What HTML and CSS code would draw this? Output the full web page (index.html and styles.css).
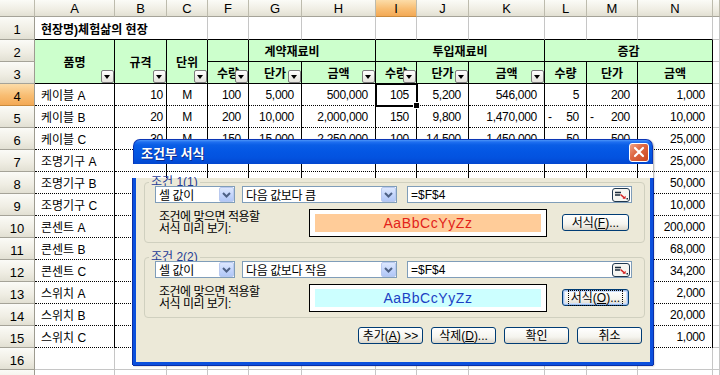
FILE: index.html
```html
<!DOCTYPE html>
<html lang="ko">
<head>
    <meta charset="UTF-8">
    <meta name="viewport" content="width=device-width, initial-scale=1.0">
    <title>조건부 서식</title>
    <link rel="stylesheet" href="styles.css">
</head>
<body>

<div class="sheet">
    <div class="ch"></div>
    <div class="ch">A</div><div class="ch">B</div><div class="ch">C</div><div class="ch">F</div><div class="ch">G</div><div class="ch">H</div><div class="ch sel">I</div><div class="ch">J</div><div class="ch">K</div><div class="ch">L</div><div class="ch">M</div><div class="ch">N</div><div class="ch"></div>

    <div class="rh">1</div>
    <div class="top cs3 bold t">현장명)체험삶의 현장</div>
    <div class="top"></div><div class="top"></div><div class="top"></div><div class="top"></div><div class="top"></div><div class="top"></div><div class="top"></div><div class="top"></div><div class="top"></div><div></div>

    <div class="rh">2</div>
    <div class="g rs2">품명<i class="fb"></i></div>
    <div class="g rs2">규격<i class="fb"></i></div>
    <div class="g rs2">단위<i class="fb"></i></div>
    <div class="g"></div>
    <div class="g cs2 shift">계약재료비</div>
    <div class="g cs3">투입재료비</div>
    <div class="g cs3">증감</div>
    <div></div>

    <div class="rh">3</div>
    <div class="g">수량<i class="fb"></i></div>
    <div class="g">단가<i class="fb"></i></div>
    <div class="g">금액<i class="fb"></i></div>
    <div class="g">수량<i class="fb"></i></div>
    <div class="g">단가<i class="fb"></i></div>
    <div class="g">금액<i class="fb"></i></div>
    <div class="g">수량</div>
    <div class="g">단가</div>
    <div class="g">금액</div>
    <div></div>

    <div class="rh sel">4</div>
    <div class="d t">케이블 A</div><div class="d n nb">10</div><div class="d ct">M</div><div class="d n">100</div><div class="d n">5,000</div><div class="d n">500,000</div><div class="d n act">105</div><div class="d n">5,200</div><div class="d n">546,000</div><div class="d n">5</div><div class="d n">200</div><div class="d n">1,000</div><div></div>

    <div class="rh">5</div>
    <div class="d t">케이블 B</div><div class="d n nb">20</div><div class="d ct">M</div><div class="d n">200</div><div class="d n">10,000</div><div class="d n">2,000,000</div><div class="d n">150</div><div class="d n">9,800</div><div class="d n">1,470,000</div><div class="d acc"><span>-</span><span>50</span></div><div class="d acc"><span>-</span><span>200</span></div><div class="d n">10,000</div><div></div>

    <div class="rh">6</div>
    <div class="d t">케이블 C</div><div class="d n nb">30</div><div class="d ct">M</div><div class="d n">150</div><div class="d n">15,000</div><div class="d n">2,250,000</div><div class="d n">100</div><div class="d n">14,500</div><div class="d n">1,450,000</div><div class="d n">50</div><div class="d n">500</div><div class="d n">25,000</div><div></div>

    <div class="rh">7</div>
    <div class="d t">조명기구 A</div><div class="d"></div><div class="d"></div><div class="d"></div><div class="d"></div><div class="d"></div><div class="d"></div><div class="d"></div><div class="d"></div><div class="d"></div><div class="d"></div><div class="d n">25,000</div><div></div>

    <div class="rh">8</div>
    <div class="d t">조명기구 B</div><div class="d"></div><div class="d"></div><div class="d"></div><div class="d"></div><div class="d"></div><div class="d"></div><div class="d"></div><div class="d"></div><div class="d"></div><div class="d"></div><div class="d n">50,000</div><div></div>

    <div class="rh">9</div>
    <div class="d t">조명기구 C</div><div class="d"></div><div class="d"></div><div class="d"></div><div class="d"></div><div class="d"></div><div class="d"></div><div class="d"></div><div class="d"></div><div class="d"></div><div class="d"></div><div class="d n">10,000</div><div></div>

    <div class="rh">10</div>
    <div class="d t">콘센트 A</div><div class="d"></div><div class="d"></div><div class="d"></div><div class="d"></div><div class="d"></div><div class="d"></div><div class="d"></div><div class="d"></div><div class="d"></div><div class="d"></div><div class="d n">200,000</div><div></div>

    <div class="rh">11</div>
    <div class="d t">콘센트 B</div><div class="d"></div><div class="d"></div><div class="d"></div><div class="d"></div><div class="d"></div><div class="d"></div><div class="d"></div><div class="d"></div><div class="d"></div><div class="d"></div><div class="d n">68,000</div><div></div>

    <div class="rh">12</div>
    <div class="d t">콘센트 C</div><div class="d"></div><div class="d"></div><div class="d"></div><div class="d"></div><div class="d"></div><div class="d"></div><div class="d"></div><div class="d"></div><div class="d"></div><div class="d"></div><div class="d n">34,200</div><div></div>

    <div class="rh">13</div>
    <div class="d t">스위치 A</div><div class="d"></div><div class="d"></div><div class="d"></div><div class="d"></div><div class="d"></div><div class="d"></div><div class="d"></div><div class="d"></div><div class="d"></div><div class="d"></div><div class="d n">2,000</div><div></div>

    <div class="rh">14</div>
    <div class="d t">스위치 B</div><div class="d"></div><div class="d"></div><div class="d"></div><div class="d"></div><div class="d"></div><div class="d"></div><div class="d"></div><div class="d"></div><div class="d"></div><div class="d"></div><div class="d n">20,000</div><div></div>

    <div class="rh">15</div>
    <div class="d t">스위치 C</div><div class="d"></div><div class="d"></div><div class="d"></div><div class="d"></div><div class="d"></div><div class="d"></div><div class="d"></div><div class="d"></div><div class="d"></div><div class="d"></div><div class="d n">1,000</div><div></div>

    <div class="rh">16</div>
    <div></div><div></div><div></div><div></div><div></div><div></div><div></div><div></div><div></div><div></div><div></div><div></div><div></div>

    <div class="rh"></div>
    <div></div><div></div><div></div><div></div><div></div><div></div><div></div><div></div><div></div><div></div><div></div><div></div><div></div>
</div>

<!-- conditional formatting dialog, floats over the sheet -->
<div class="dialog">
    <div class="titlebar">
        <span class="title">조건부 서식</span>
        <span class="close">
            <svg width="12" height="12" viewBox="0 0 12 12"><path d="M2 2 L10 10 M10 2 L2 10" stroke="#fff" stroke-width="2.2" stroke-linecap="round"/></svg>
        </span>
    </div>
    <div class="dbody">
        <fieldset class="group">
            <legend>조건 1(<u>1</u>)</legend>
            <div class="row1">
                <div class="combo w80"><span>셀 값이</span><i class="drop"><svg width="9" height="6" viewBox="0 0 9 6"><path d="M1 1 L4.5 4.5 L8 1" fill="none" stroke="#4d6185" stroke-width="2"/></svg></i></div>
                <div class="combo w155"><span>다음 값보다 큼</span><i class="drop"><svg width="9" height="6" viewBox="0 0 9 6"><path d="M1 1 L4.5 4.5 L8 1" fill="none" stroke="#4d6185" stroke-width="2"/></svg></i></div>
                <div class="edit"><span>=$F$4</span>
                    <svg class="ref" width="18" height="14" viewBox="0 0 18 14"><rect x="0.5" y="0.5" width="17" height="13" rx="2.5" fill="#f6f6f2" stroke="#20384f"/><path d="M3 4.5 H9 M3 7 H8" stroke="#1a2a3a" stroke-width="1.4"/><path d="M8.5 6.5 L12.5 10" stroke="#d42020" stroke-width="1.6"/><path d="M10.5 10.8 L13.6 10.8 L13.6 7.8 Z" fill="#d42020"/><rect x="14.5" y="10" width="1.5" height="1.5" fill="#1a2a3a"/></svg>
                </div>
            </div>
            <div class="row2">
                <div class="hint"><span>조건에 맞으면 적용할</span><span>서식 미리 보기:</span></div>
                <div class="preview"><div class="swatch peach">AaBbCcYyZz</div></div>
                <button class="btn fmt">서식(<u>F</u>)...</button>
            </div>
        </fieldset>

        <fieldset class="group g2">
            <legend>조건 2(<u>2</u>)</legend>
            <div class="row1">
                <div class="combo w80"><span>셀 값이</span><i class="drop"><svg width="9" height="6" viewBox="0 0 9 6"><path d="M1 1 L4.5 4.5 L8 1" fill="none" stroke="#4d6185" stroke-width="2"/></svg></i></div>
                <div class="combo w155"><span>다음 값보다 작음</span><i class="drop"><svg width="9" height="6" viewBox="0 0 9 6"><path d="M1 1 L4.5 4.5 L8 1" fill="none" stroke="#4d6185" stroke-width="2"/></svg></i></div>
                <div class="edit"><span>=$F$4</span>
                    <svg class="ref" width="18" height="14" viewBox="0 0 18 14"><rect x="0.5" y="0.5" width="17" height="13" rx="2.5" fill="#f6f6f2" stroke="#20384f"/><path d="M3 4.5 H9 M3 7 H8" stroke="#1a2a3a" stroke-width="1.4"/><path d="M8.5 6.5 L12.5 10" stroke="#d42020" stroke-width="1.6"/><path d="M10.5 10.8 L13.6 10.8 L13.6 7.8 Z" fill="#d42020"/><rect x="14.5" y="10" width="1.5" height="1.5" fill="#1a2a3a"/></svg>
                </div>
            </div>
            <div class="row2">
                <div class="hint"><span>조건에 맞으면 적용할</span><span>서식 미리 보기:</span></div>
                <div class="preview"><div class="swatch cyan">AaBbCcYyZz</div></div>
                <button class="btn fmt focus"><span>서식(<u>O</u>)...</span></button>
            </div>
        </fieldset>

        <div class="actions">
            <button class="btn">추가(<u>A</u>) &gt;&gt;</button>
            <button class="btn">삭제(<u>D</u>)...</button>
            <button class="btn">확인</button>
            <button class="btn">취소</button>
        </div>
    </div>
</div>

</body>
</html>
```

FILE: styles.css
```css
html, body {
    margin: 0;
    overflow: hidden;
    background: #fff;
}

body {
    font-family: "Liberation Sans", "Noto Sans CJK KR", sans-serif;
    font-size: 12px;
    color: #000;
}

/* spreadsheet grid */
.sheet {
    display: grid;
    grid-template-columns: 35px 80px 52px 41px 41px 53px 74px 41px 52px 76px 42px 51px 75px 1fr;
    grid-template-rows: 17px 23px repeat(16, 22px);
    width: 720px;
}

.sheet > div {
    box-sizing: border-box;
    border-right: 1px solid #c6c6c6;
    border-bottom: 1px solid #c6c6c6;
    display: flex;
    align-items: center;
    padding: 0 3px;
    white-space: nowrap;
    overflow: hidden;
    position: relative;
    letter-spacing: -0.3px;
}

.sheet > .ch,
.sheet > .rh {
    background: linear-gradient(#fbfbf7, #efede3 60%, #e2e0d3);
    border-right-color: #bdbbad;
    border-bottom-color: #a5a398;
    justify-content: center;
    font-size: 13px;
    padding: 0;
    letter-spacing: 0;
}

.sheet > .rh {
    border-right-color: #9d9b90;
    padding-top: 3px;
}

.sheet > .sel {
    background: linear-gradient(#fcdca8, #f8bd72 55%, #f3a955);
    border-bottom-color: #c98a3c;
}

.sheet > .top {
    border-bottom-color: #000;
}

.cs2 { grid-column: span 2; }
.cs3 { grid-column: span 3; }
.rs2 { grid-row: span 2; }

.bold {
    font-weight: bold;
}

.sheet > .t {
    padding-left: 6px;
    letter-spacing: 0;
}

/* green header cells */
.sheet > .g {
    background: #ccffcc;
    border-right-color: #000;
    border-bottom-color: #000;
    justify-content: center;
    font-weight: bold;
    padding: 0;
    letter-spacing: 0;
}

.sheet > .shift {
    padding-right: 40px;
}

/* autofilter button */
.fb {
    position: absolute;
    right: 0;
    bottom: 0;
    width: 13px;
    height: 13px;
    box-sizing: border-box;
    border: 1px solid #7d7d7d;
    border-radius: 2px;
    background: linear-gradient(#ffffff, #e4e3dc);
}

.fb::after {
    content: "";
    position: absolute;
    left: 2px;
    top: 4px;
    border-left: 3.5px solid transparent;
    border-right: 3.5px solid transparent;
    border-top: 4px solid #000;
}

/* data cells */
.sheet > .d {
    border-right: 1px solid #000;
    border-bottom: 1px dotted #000;
}

.sheet > .n {
    justify-content: flex-end;
    padding-right: 7px;
}

.sheet > .nb {
    padding-right: 3px;
}

.sheet > .ct {
    justify-content: center;
}

.sheet > .acc {
    justify-content: space-between;
    padding-right: 7px;
}

.sheet > .act {
    overflow: visible;
    outline: 2px solid #000;
    outline-offset: -1px;
    z-index: 1;
}

.sheet > .act::after {
    content: "";
    position: absolute;
    right: -4px;
    bottom: -4px;
    width: 5px;
    height: 5px;
    background: #000;
    border: 1px solid #fff;
}

/* dialog window */
.dialog {
    position: absolute;
    left: 133px;
    top: 139px;
    width: 520px;
    font-size: 12px;
    box-shadow: 1px 1px 2px rgba(0, 0, 0, 0.35);
    border-radius: 7px 7px 0 0;
}

.titlebar {
    height: 25px;
    border-radius: 7px 7px 0 0;
    background: linear-gradient(#4b95f8 0, #1f6ff0 2px, #0a5ee6 5px, #0457e4 45%, #0352df 75%, #0246cf 100%);
    display: flex;
    align-items: center;
    justify-content: space-between;
    padding: 0 3px 0 7px;
    border: 1px solid #0b35b5;
    border-bottom: 0;
    box-sizing: border-box;
}

.title {
    color: #fff;
    font-weight: bold;
    font-size: 13px;
    text-shadow: 1px 1px 0 #0b2a8c;
}

.close {
    width: 20px;
    height: 19px;
    box-sizing: border-box;
    border: 1px solid #fff;
    border-radius: 3px;
    background: linear-gradient(135deg, #f0a486, #de6a45 40%, #c9451f);
    display: flex;
    align-items: center;
    justify-content: center;
}

.dbody {
    background: #ece9d8;
    border: 3px solid #0b50dd;
    border-top: 0;
    padding: 0 5px 18px 8px;
    box-shadow: -1px 0 0 #0a2fa8, 1px 0 0 #0a2fa8, 0 1px 0 #0a2fa8;
}

.group {
    margin: 14px 0 0;
    padding: 0 6px 5px 10px;
    border: 1px solid #d0d0bf;
    border-radius: 4px;
    min-width: 0;
}

.g2 {
    margin-top: 10px;
}

.group legend {
    line-height: 8px;
    padding: 0 2px;
    margin-left: -6px;
    color: #1f3c96;
}

.row1 {
    display: flex;
    height: 17px;
}

.combo, .edit {
    box-sizing: border-box;
    height: 17px;
    border: 1px solid #7f9db9;
    background: #fff;
    display: flex;
    align-items: center;
    justify-content: space-between;
    padding-left: 3px;
    letter-spacing: -0.4px;
}

.w80 {
    width: 80px;
}

.w155 {
    width: 155px;
    margin-left: 7px;
}

.drop {
    width: 15px;
    height: 15px;
    box-sizing: border-box;
    border: 1px solid #b9c9ef;
    border-radius: 2px;
    background: linear-gradient(#dde8fe, #c1d3fb 60%, #b1c7f6);
    display: flex;
    align-items: center;
    justify-content: center;
}

.edit {
    width: 225px;
    margin-left: 10px;
    padding-right: 1px;
    letter-spacing: 0;
}

.row2 {
    display: flex;
    align-items: center;
    height: 29px;
    margin-top: 5px;
}

.hint {
    width: 150px;
    margin-left: 4px;
    display: flex;
    flex-direction: column;
    letter-spacing: -0.5px;
}

.hint span {
    display: block;
    height: 12px;
    line-height: 12px;
}

.preview {
    box-sizing: border-box;
    width: 238px;
    height: 28px;
    border: 1px solid #000;
    padding: 4px 5px;
    background: #fff;
}

.swatch {
    height: 100%;
    display: flex;
    align-items: center;
    justify-content: center;
    font-size: 14px;
    letter-spacing: 0.6px;
}

.peach {
    background: #ffcc99;
    color: #e2231a;
}

.cyan {
    background: #ccffff;
    color: #1b3fc4;
}

.btn {
    box-sizing: border-box;
    height: 17px;
    border: 1px solid #003c74;
    border-radius: 3px;
    background: linear-gradient(#ffffff, #f5f4ee 60%, #dcd7cb);
    font-family: "Liberation Sans", "Noto Sans CJK KR", sans-serif;
    font-size: 12px;
    color: #000;
    padding: 0;
    line-height: 14px;
}

.fmt {
    width: 67px;
    margin-left: 15px;
}

.focus {
    box-shadow: inset 0 0 0 1px #9cbcec, inset 0 0 0 2px #cfe0fb;
}

.focus span {
    outline: 1px dotted #000;
    outline-offset: 0;
    padding: 0 2px;
}

.actions {
    display: flex;
    justify-content: flex-end;
    gap: 8px;
    margin-top: 9px;
    padding-right: 3px;
}

.actions .btn {
    width: 65px;
}
```
